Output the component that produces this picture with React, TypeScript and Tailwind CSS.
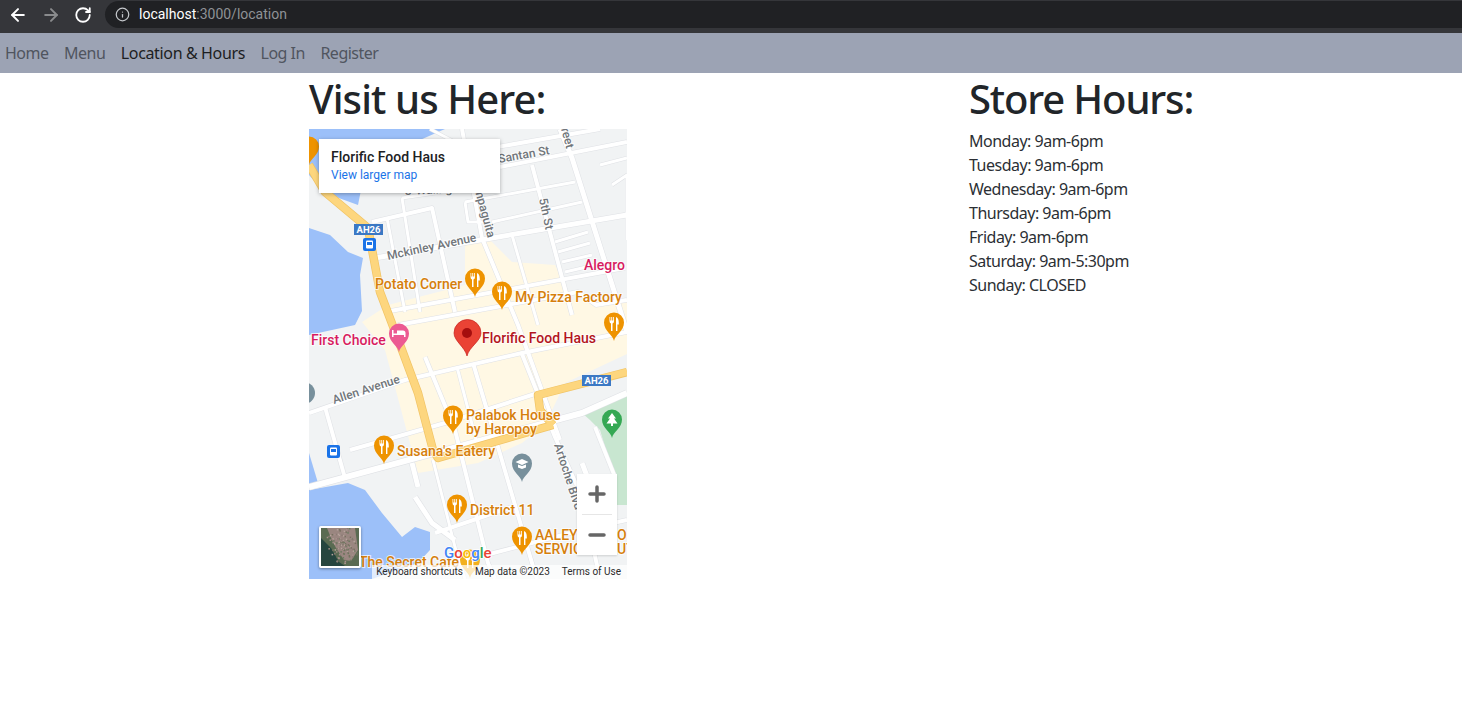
import React from 'react'
import { ArrowLeft, ArrowRight, RotateCw, Info, Plus, Minus } from 'lucide-react'

const pageFont = '[font-family:"Noto_Sans",sans-serif]'

const hours = [
  'Monday: 9am-6pm',
  'Tuesday: 9am-6pm',
  'Wednesday: 9am-6pm',
  'Thursday: 9am-6pm',
  'Friday: 9am-6pm',
  'Saturday: 9am-5:30pm',
  'Sunday: CLOSED',
]

// white streets, screen coordinates (viewBox of the map is offset to match)
const streets: [string, number][] = [
  ['M462 129 L482 238 L518 325 L560 440', 4],
  ['M532 165 L572 315', 4],
  ['M560 129 L572 158 L627 332', 5],
  ['M375 258 L627 215', 5],
  ['M500 167 L627 142', 4],
  ['M480 150 L600 129', 4],
  ['M402 198 L470 188', 3],
  ['M372 222 L432 208 L455 312', 4],
  ['M402 198 L420 312', 3],
  ['M387 218 L405 312', 3],
  ['M465 202 L575 182 M465 202 L468 222 L490 222', 3],
  ['M492 222 L582 202', 3],
  ['M555 242 L588 232 M558 252 L590 243 M562 262 L592 255 M565 272 L595 265', 3],
  ['M512 235 L538 325', 3],
  ['M385 312 L625 268', 4],
  ['M398 325 L578 292 L596 305 L627 300', 4],
  ['M309 413 L405 380 L522 353 L627 332', 4],
  ['M325 407 L345 478', 4],
  ['M309 487 L582 413 L627 393', 6],
  ['M350 450 L445 423 L538 393', 4],
  ['M425 357 L455 430 L488 563 L495 579', 4],
  ['M433 460 L455 547 L465 579', 3],
  ['M457 367 L478 447', 3],
  ['M473 363 L498 447 L532 563 L537 579', 4],
  ['M522 354 L555 437 L582 497 L600 579', 4],
  ['M412 463 L418 487', 5],
  ['M415 497 L432 523 L455 540', 5],
  ['M435 533 L512 507', 4],
  ['M478 557 L582 530 L627 520', 4],
  ['M582 463 L595 497', 5],
  ['M595 427 L615 477', 4],
  ['M600 165 L627 158 M612 185 L627 175 L627 240', 3],
  ['M430 129 L470 150', 3],
]

const Pin = ({ x, y, fill = '#ee9300', kind = 'food' }: { x: number; y: number; fill?: string; kind?: 'food' | 'school' | 'hotel' | 'park' | 'none' }) => (
  <g transform={`translate(${x} ${y})`}>
    <path d="M0 15 C-1 9 -10 5 -10 -3.500 A10 10 0 0 1 10 -3.500 C10 5 1 9 0 15Z" fill={fill} />
    {kind === 'school' && <path d="M-6.500 -5 L0 -8 L6.500 -5 L0 -2Z M-4 -2.500 V0.500 L0 2 L4 0.500 V-2.500 L0 -1Z" fill="#fff" />}
    {kind === 'hotel' && <path d="M-7 -7 H-5.500 V-3.500 H-2 V-6.500 H4 Q6.500 -6.500 6.500 -4 V0 H5 V-2 H-5.500 V0 H-7Z" fill="#fff" />}
    {kind === 'park' && <path d="M0 -10 L4 -4.500 H2 L5.500 0.500 H1 V3 H-1 V0.500 H-5.500 L-2 -4.500 H-4Z" fill="#fff" />}
    {kind === 'food' && (
      <path
        d="M-4.500 -9 V-5 Q-4.500 -3 -3 -2.500 V5 H-1.500 V-2.500 Q0 -3 0 -5 V-9 H-0.800 V-5.500 H-1.800 V-9 H-2.700 V-5.500 H-3.700 V-9Z M2 -9 Q4.800 -8 4.800 -3 V-1.500 H3.400 V5 H2Z"
        fill="#fff"
      />
    )}
  </g>
)

const Label = ({ x, y, children, fill = '#d67f0c', size = 14, rotate }: { x: number; y: number; children: React.ReactNode; fill?: string; size?: number; rotate?: number }) => (
  <text
    x={x}
    y={y}
    fill={fill}
    fontSize={size}
    fontWeight={500}
    fontFamily="Roboto, sans-serif"
    stroke="#fff"
    strokeOpacity={0.7}
    strokeWidth={2}
    paintOrder="stroke"
    transform={rotate ? `rotate(${rotate} ${x} ${y})` : undefined}
  >
    {children}
  </text>
)

const RouteShield = ({ x, y }: { x: number; y: number }) => (
  <g>
    <rect x={x} y={y} width={29} height={11} fill="#3b78c4" />
    <text x={x + 14.5} y={y + 9} fill="#fff" fontSize={9.5} fontWeight={700} fontFamily="Roboto, sans-serif" textAnchor="middle">
      AH26
    </text>
  </g>
)

const Bus = ({ x, y }: { x: number; y: number }) => (
  <g transform={`translate(${x} ${y})`}>
    <rect width={13} height={13} rx={2} fill="#1a73e8" />
    <rect x={3} y={2.5} width={7} height={8} rx={1} fill="#fff" />
    <rect x={4} y={4} width={5} height={3} fill="#1a73e8" />
  </g>
)

const highway = 'M309 165 L325 192 L368 228 L380 292 L402 350 L418 393 L433 450 L438 458 L553 425 M627 372 L538 395 L540 410 L553 425'

function MapDrawing() {
  return (
    <svg viewBox="309 129 318 450" width={318} height={450} className="block">
      <rect x={309} y={129} width={318} height={450} fill="#f1f3f4" />
      {/* water */}
      <path d="M309 129 H445 L420 140 L365 170 L358 205 L325 193 L309 175Z" fill="#9cc0f9" />
      <path d="M309 228 L330 235 L348 252 L363 258 L360 275 L362 311 L355 325 L309 335Z" fill="#9cc0f9" />
      <path d="M309 453 L318 483 L309 486Z" fill="#9cc0f9" />
      <path d="M309 490 L348 483 L365 490 L382 513 L402 537 L415 527 L430 532 L430 550 L418 563 L372 579 H309Z" fill="#9cc0f9" />
      {/* built up area */}
      <path d="M465 245 L490 240 L512 262 L555 265 L572 300 L627 300 V354 L565 383 L545 425 L522 443 L478 463 L418 473 L385 350 L362 322 L388 305 L465 285Z" fill="#fff8e4" />
      {/* park */}
      <path d="M582 413 L600 405 L627 395 V505 H617 L615 480 L600 430 L590 420Z" fill="#c8e6d0" />
      {/* street casing, then street */}
      {streets.map(([d, w], i) => (
        <path key={i} d={d} stroke="#dfe1e5" strokeWidth={w + 1} fill="none" strokeLinejoin="round" />
      ))}
      {streets.map(([d, w], i) => (
        <path key={i} d={d} stroke="#ffffff" strokeWidth={w} fill="none" strokeLinejoin="round" />
      ))}
      {/* highway */}
      <path d={highway} stroke="#f1c466" strokeWidth={8.5} fill="none" strokeLinejoin="round" />
      <path d={highway} stroke="#fdd67e" strokeWidth={7} fill="none" strokeLinejoin="round" />
      {/* street names */}
      <Label x={388} y={260} fill="#70757a" size={12} rotate={-12}>Mckinley Avenue</Label>
      <Label x={334} y={404} fill="#70757a" size={12} rotate={-18}>Allen Avenue</Label>
      <Label x={499} y={163} fill="#70757a" size={12} rotate={-10}>Santan St</Label>
      <Label x={405} y={195} fill="#70757a" size={12} rotate={-3}>3-Waling St</Label>
      <Label x={471} y={176} fill="#70757a" size={12} rotate={75}>Sampaguita</Label>
      <Label x={539} y={199} fill="#70757a" size={12} rotate={78}>5th St</Label>
      <Label x={558} y={118} fill="#70757a" size={12} rotate={75}>Street</Label>
      <Label x={554} y={445} fill="#70757a" size={12} rotate={72}>Artoche Blvd</Label>
      {/* places */}
      <RouteShield x={354} y={224} />
      <RouteShield x={582} y={375} />
      <Bus x={363} y={238} />
      <Bus x={327} y={445} />
      <Pin x={475} y={282} />
      <Label x={375} y={289}>Potato Corner</Label>
      <Pin x={502} y={295} />
      <Label x={515} y={302}>My Pizza Factory</Label>
      <Label x={584} y={270} fill="#d81b60">Alegro</Label>
      <Pin x={614} y={326} />
      <Pin x={309} y={150} kind="none" />
      <Pin x={399} y={337} fill="#ec5a92" kind="hotel" />
      <Label x={311} y={345} fill="#d81b60">First Choice</Label>
      <Pin x={453} y={419} />
      <Label x={466} y={420}>Palabok House</Label>
      <Label x={466} y={434}>by Haropoy</Label>
      <Pin x={384} y={449} />
      <Label x={397} y={456}>Susana's Eatery</Label>
      <Pin x={522} y={467} fill="#78909c" kind="school" />
      <Pin x={457} y={508} />
      <Label x={470} y={515}>District 11</Label>
      <Pin x={522} y={540} />
      <Label x={535} y={540}>AALEY</Label>
      <Label x={535} y={554}>SERVICE</Label>
      <Label x={617} y={540}>O</Label>
      <Label x={617} y={554}>UT</Label>
      <Label x={359} y={567}>The Secret Cafe</Label>
      <Pin x={470} y={563} fill="#f2b01e" />
      <Pin x={612} y={423} fill="#34a853" kind="park" />
      <circle cx={304} cy={393} r={11} fill="#78909c" />
      {/* main marker */}
      <path d="M467 356 C465 347 454 341 454 333 A13.500 13.500 0 0 1 481 333 C481 341 469 347 467 356Z" fill="#ea4335" stroke="#c5221f" strokeWidth={0.7} />
      <circle cx={467} cy={333} r={5} fill="#a50e0e" />
      <Label x={482} y={343} fill="#b3151d">Florific Food Haus</Label>
      {/* google logo */}
      <text x={444} y={558} fontSize={15} fontWeight={500} fontFamily="Roboto, sans-serif" stroke="#fff" strokeWidth={1.5} paintOrder="stroke">
        <tspan fill="#4285f4">G</tspan>
        <tspan fill="#ea4335">o</tspan>
        <tspan fill="#fbbc05">o</tspan>
        <tspan fill="#4285f4">g</tspan>
        <tspan fill="#34a853">l</tspan>
        <tspan fill="#ea4335">e</tspan>
      </text>
    </svg>
  )
}

// speckled city texture for the satellite thumbnail
const speckles = Array.from({ length: 140 }, (_, i) => {
  const a = (i * 137.5 * Math.PI) / 180
  const r = 2 + (i % 17)
  return {
    x: 21 + Math.cos(a) * r * 0.8 + (i % 5) - 2,
    y: 15 + Math.sin(a) * r * 1.05 + (i % 7) / 2,
    fill: ['#a58f8a', '#8c7a74', '#b7a49c', '#75705f', '#6a7a5f'][i % 5],
  }
})

function SatelliteThumb() {
  return (
    <svg viewBox="0 0 38 38" width={38} height={38} className="block">
      <rect width={38} height={38} fill="#26453f" />
      <path d="M0 0 H38 V38 H24 L18 34 L10 20 L0 10Z" fill="#5a6b52" />
      <path d="M6 0 H34 L37 22 L30 33 L23 32 L15 20 L10 10Z" fill="#9a8680" />
      {speckles.map((s, i) => (
        <rect key={i} x={s.x} y={s.y} width={1.5} height={1.5} fill={s.fill} />
      ))}
    </svg>
  )
}

function MapEmbed() {
  return (
    <div className="relative w-[318px] h-[450px] overflow-hidden [font-family:Roboto,sans-serif]">
      <MapDrawing />

      {/* place card */}
      <div className="absolute left-[10px] top-[10px] w-[181px] h-[54px] bg-white shadow-[0_1px_4px_rgba(0,0,0,0.3)] pl-3 pt-[10px]">
        <div className="text-[14px] leading-[17px] font-medium text-[#202124]">Florific Food Haus</div>
        <div className="mt-[2px] text-[12px] leading-[14px] text-[#1a73e8]">View larger map</div>
      </div>

      {/* zoom controls */}
      <div className="absolute left-[268px] top-[345px] w-10 h-[81px] bg-white flex flex-col items-center shadow-[0_1px_2px_rgba(0,0,0,0.15)]">
        <div className="h-10 flex items-center justify-center">
          <Plus size={24} strokeWidth={3.5} color="#666" absoluteStrokeWidth />
        </div>
        <div className="w-[30px] h-px bg-[#e6e6e6]" />
        <div className="h-10 flex items-center justify-center">
          <Minus size={24} strokeWidth={3.5} color="#666" absoluteStrokeWidth />
        </div>
      </div>

      {/* satellite toggle */}
      <div className="absolute left-[10px] top-[397px] border-2 border-white rounded-[2px] shadow-[0_1px_3px_rgba(0,0,0,0.4)]">
        <SatelliteThumb />
      </div>

      {/* attribution */}
      <div className="absolute right-0 bottom-0 h-[14px] flex items-center gap-3 bg-white/70 pl-[4px] pr-[6px] text-[10px] leading-[14px] text-[#2b2b2b] whitespace-nowrap">
        <span>Keyboard shortcuts</span>
        <span>Map data ©2023</span>
        <span>Terms of Use</span>
      </div>
    </div>
  )
}

export default function App(): React.ReactElement {
  return (
    <div className={`min-h-[712px] bg-white text-[#2b2f34] ${pageFont}`}>
      {/* browser toolbar */}
      <div className="h-[33px] flex items-start bg-[#35363a] pt-px">
        <div className="h-[27px] flex items-center gap-[13px] pl-[8px] pr-[13px]">
          <ArrowLeft size={20} color="#fff" strokeWidth={2.4} />
          <ArrowRight size={20} color="#8a8b8d" strokeWidth={2.4} />
          <RotateCw size={18} color="#fff" strokeWidth={2.4} />
        </div>
        <div className="flex-1 h-[27px] rounded-l-full bg-[#202124] flex items-center pl-[10px] gap-[9px] [font-family:Roboto,sans-serif] text-[14px]">
          <Info size={15} color="#c4c7cb" />
          <span>
            <span className="text-white">localhost</span>
            <span className="text-[#8f9296]">:3000/location</span>
          </span>
        </div>
      </div>

      {/* site nav */}
      <nav className="h-10 bg-[#9ca3b4] flex items-center pl-[5px] gap-[15.5px] text-[16px] tracking-[-0.5px] text-[#50555f]">
        <span>Home</span>
        <span>Menu</span>
        <span className="text-[#1c1e22] tracking-[-0.36px]">Location &amp; Hours</span>
        <span>Log In</span>
        <span>Register</span>
      </nav>

      <main className="flex pl-[309px]">
        <section className="w-[660px]">
          <h1 className="pt-1 text-[40px] leading-[44px] font-medium tracking-[-0.9px] text-[#212529] mb-2">Visit us Here:</h1>
          <MapEmbed />
        </section>
        <section>
          <h1 className="pt-1 text-[40px] leading-[44px] font-medium tracking-[-1.15px] text-[#212529] mb-2">Store Hours:</h1>
          <ul className="text-[16px] leading-6 tracking-[-0.5px]">
            {hours.map((line) => (
              <li key={line}>{line}</li>
            ))}
          </ul>
        </section>
      </main>
    </div>
  )
}
